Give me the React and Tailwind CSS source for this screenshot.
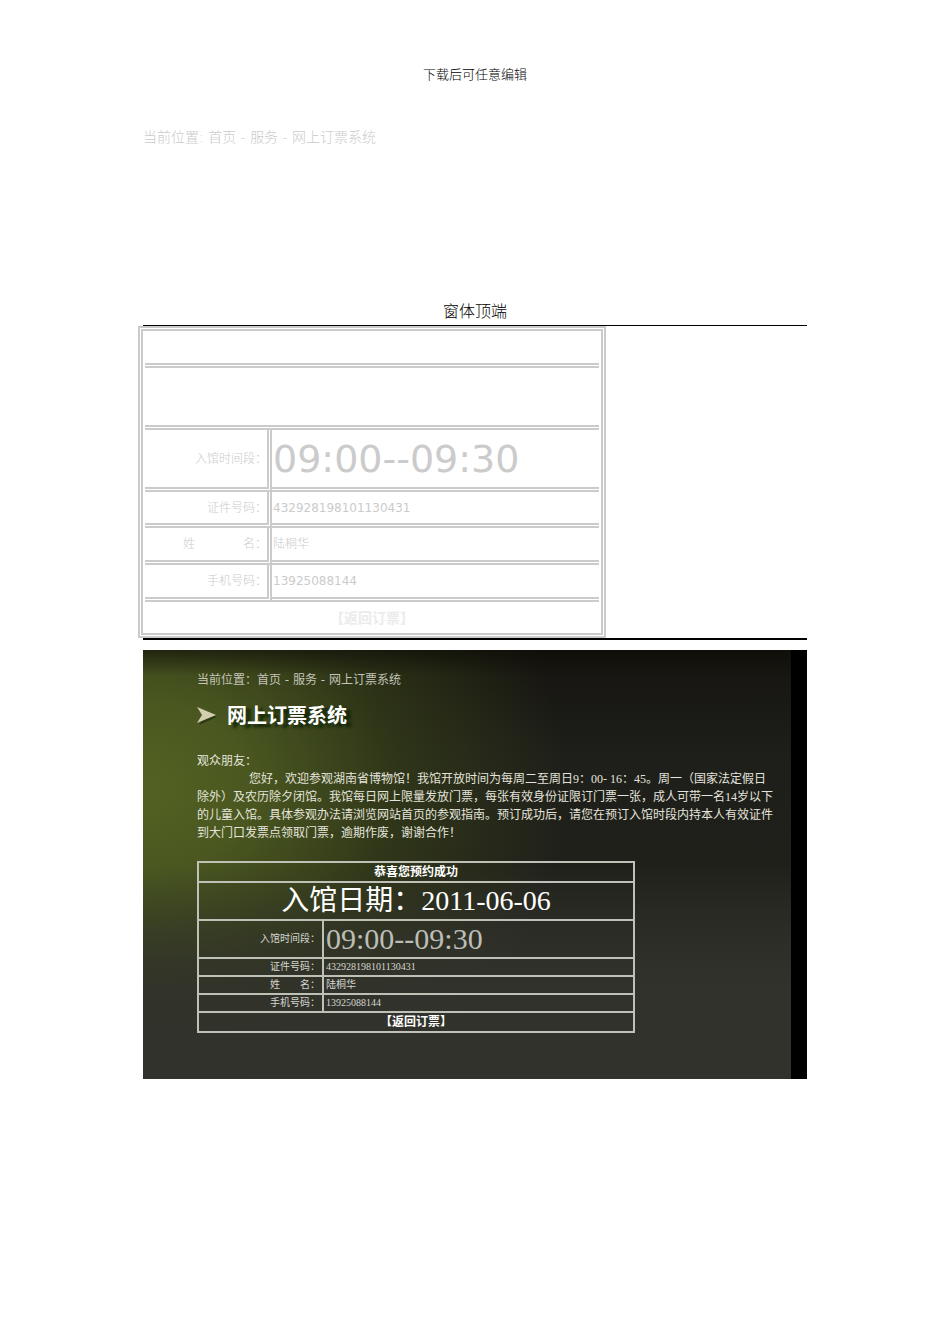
const OUTER = "border-[#cbcbcb]";
const LABEL = `${OUTER} border-r-[5px] border-b-[5px] border-double text-right font-light`;
const VALUE = `${OUTER} border-b-[5px] border-double pl-px text-left`;

const PHOTO_LABEL = "border-2 border-[#bfc0b6] py-0 pr-0.5 pl-1 text-right font-normal";
const PHOTO_VALUE = "border-2 border-[#bfc0b6] py-0 pl-0.5 text-left";
const PHOTO_WIDE = "border-2 border-[#bfc0b6] p-0 text-center";

function FormTable() {
  return (
    <table
      className={`-ml-[5px] w-[468px] max-w-full table-fixed border-separate border-spacing-0 border-[5px] border-double ${OUTER} px-[2px] font-['DejaVu_Sans','Noto_Sans_CJK_SC',sans-serif] text-xs leading-4 text-[#cbcbcb]`}
    >
      <colgroup>
        <col className="w-[127px]" />
        <col />
      </colgroup>
      <tbody>
        <tr className="h-[37px]">
          <td colSpan={2} className={VALUE}></td>
        </tr>
        <tr className="h-[62px]">
          <td colSpan={2} className={VALUE}></td>
        </tr>
        <tr className="h-[62px]">
          <th scope="row" className={LABEL}>入馆时间段：</th>
          <td className={`${VALUE} text-[38px] leading-10`}>09:00--09:30</td>
        </tr>
        <tr className="h-[36px]">
          <th scope="row" className={LABEL}>证件号码：</th>
          <td className={VALUE}>432928198101130431</td>
        </tr>
        <tr className="h-[37px]">
          <th scope="row" className={LABEL}>
            <span className="flex justify-end gap-12">
              <span>姓</span>
              <span>名：</span>
            </span>
          </th>
          <td className={`${VALUE} font-light`}>陆桐华</td>
        </tr>
        <tr className="h-[37px]">
          <th scope="row" className={LABEL}>手机号码：</th>
          <td className={VALUE}>13925088144</td>
        </tr>
        <tr className="h-[31px]">
          <td colSpan={2} className="text-center">
            <a href="#booking" className="text-sm font-bold text-[#ebebeb]">【返回订票】</a>
          </td>
        </tr>
      </tbody>
    </table>
  );
}

function BookingTable() {
  return (
    <table className="mt-[19px] w-[438px] max-w-full table-fixed border-collapse font-['Liberation_Serif','Noto_Sans_CJK_SC',serif] text-[10px] leading-3 text-[#d6d6d0]">
      <colgroup>
        <col className="w-[125px]" />
        <col />
      </colgroup>
      <tbody>
        <tr className="h-5">
          <th colSpan={2} className={`${PHOTO_WIDE} text-xs font-bold text-white`}>恭喜您预约成功</th>
        </tr>
        <tr className="h-[38px]">
          <td colSpan={2} className={`${PHOTO_WIDE} text-[28px] leading-8 font-normal text-white`}>
            入馆日期：2011-06-06
          </td>
        </tr>
        <tr className="h-[38px]">
          <th scope="row" className={PHOTO_LABEL}>入馆时间段：</th>
          <td className={`${PHOTO_VALUE} text-[30px] leading-8 text-[#bdbdb8]`}>09:00--09:30</td>
        </tr>
        <tr className="h-[18px]">
          <th scope="row" className={PHOTO_LABEL}>证件号码：</th>
          <td className={PHOTO_VALUE}>432928198101130431</td>
        </tr>
        <tr className="h-[18px]">
          <th scope="row" className={PHOTO_LABEL}>
            <span className="flex justify-end gap-5">
              <span>姓</span>
              <span>名：</span>
            </span>
          </th>
          <td className={PHOTO_VALUE}>陆桐华</td>
        </tr>
        <tr className="h-[18px]">
          <th scope="row" className={PHOTO_LABEL}>手机号码：</th>
          <td className={PHOTO_VALUE}>13925088144</td>
        </tr>
        <tr className="h-5">
          <td colSpan={2} className={PHOTO_WIDE}>
            <a href="#booking" className="text-xs font-bold text-white">【返回订票】</a>
          </td>
        </tr>
      </tbody>
    </table>
  );
}

function BookingPanel() {
  return (
    <section className="mt-2.5 flex bg-black">
      <div className="min-w-0 grow bg-[linear-gradient(to_bottom,#0c0b0690_0%,transparent_6%),linear-gradient(to_bottom,transparent_50%,#31322ccc_78%,#31322c_100%),radial-gradient(ellipse_66%_80%_at_0%_32%,#536223_0%,#4a5720_25%,#363f18b0_60%,transparent_100%),linear-gradient(to_bottom,#15140f_0%,#1e1e1a_25%,#20201b_50%,#292924_68%,#31322c_82%,#30312c_100%)] pt-[21px] pb-[46px] pl-[54px] font-['Liberation_Serif','Noto_Sans_CJK_SC',serif] text-xs leading-[18px] text-[#e4e4dc]">
        <nav className="font-['DejaVu_Sans','Noto_Sans_CJK_SC',sans-serif] text-[#c4c4ba]">
          当前位置：<a href="#home">首页</a> - <a href="#service">服务</a> - 网上订票系统
        </nav>
        <div className="mt-3 flex items-center gap-2.5">
          <svg className="h-5 w-5" viewBox="0 0 20 20" aria-hidden="true">
            <path d="M1 4 L20 12 L2 20 L7 12 Z" fill="#1c260a" opacity=".6" />
            <path d="M0 2 L19 10 L0 18 L5 10 Z" fill="#d3cfae" />
          </svg>
          <h1 className="font-['Noto_Sans_CJK_SC',sans-serif] text-xl leading-7 font-bold text-white [text-shadow:5px_3px_3px_#0d2405]">
            网上订票系统
          </h1>
        </div>
        <div className="mt-[23px] whitespace-nowrap">
          <p>观众朋友：</p>
          <p>
            <span className="block pl-[52px]">您好，欢迎参观湖南省博物馆！我馆开放时间为每周二至周日9：00- 16：45。周一（国家法定假日</span>
            <span className="block">除外）及农历除夕闭馆。我馆每日网上限量发放门票，每张有效身份证限订门票一张，成人可带一名14岁以下</span>
            <span className="block">的儿童入馆。具体参观办法请浏览网站首页的参观指南。预订成功后，请您在预订入馆时段内持本人有效证件</span>
            <span className="block">到大门口发票点领取门票，逾期作废，谢谢合作！</span>
          </p>
        </div>
        <BookingTable />
      </div>
      <div className="w-4 shrink-0"></div>
    </section>
  );
}

export default function App() {
  return (
    <div className="min-h-screen bg-white font-['Liberation_Serif','Noto_Sans_CJK_SC',serif] text-black">
      <main className="mx-auto w-full max-w-[664px] pt-[65px] pb-16">
        <header className="text-center text-[13px] leading-5 font-light">下载后可任意编辑</header>
        <nav className="mt-10 font-['DejaVu_Sans','Noto_Sans_CJK_SC',sans-serif] text-sm leading-6 font-light text-[#cbcbcb]">
          当前位置: <a href="#home">首页</a> - <a href="#service">服务</a> - 网上订票系统
        </nav>
        <h2 className="mt-[151px] text-center text-base leading-6 font-light">窗体顶端</h2>
        <div className="mt-px border-t border-b-2 border-black">
          <FormTable />
        </div>
        <BookingPanel />
      </main>
    </div>
  );
}
